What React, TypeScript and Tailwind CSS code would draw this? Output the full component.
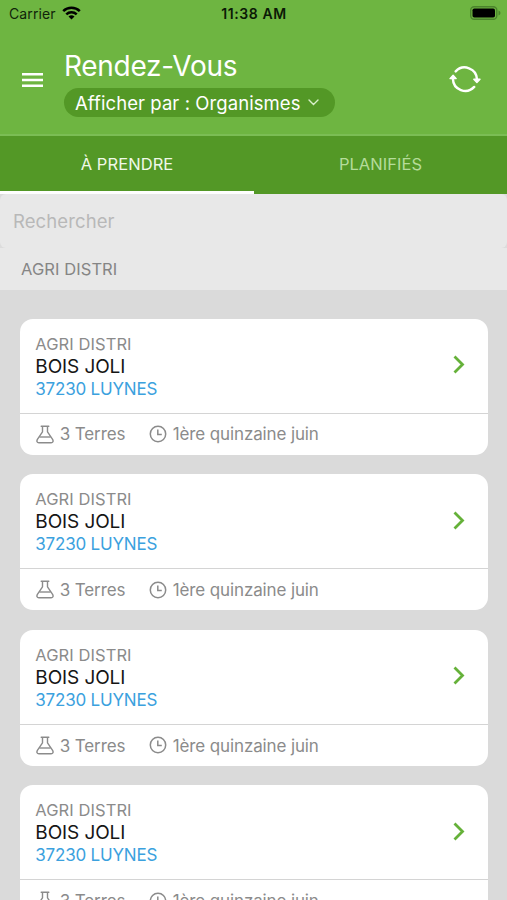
type Appointment = {
  id: number;
  organism: string;
  farm: string;
  city: string;
  samples: string;
  period: string;
};

const appointments: Appointment[] = [1, 2, 3, 4].map((id) => ({
  id,
  organism: 'AGRI DISTRI',
  farm: 'BOIS JOLI',
  city: '37230 LUYNES',
  samples: '3 Terres',
  period: '1ère quinzaine juin',
}));

function StatusBar() {
  return (
    <div className="flex h-7 items-center justify-between pl-[9px] pr-[6px] text-[14px] text-[#10240a]">
      <div className="flex w-[120px] items-center gap-[6px]">
        <span className="-mt-[2px] tracking-[0.1px]">Carrier</span>
        <svg className="-mt-[2px]" width="19" height="14" viewBox="0 0 19 14" fill="none" stroke="#000" strokeWidth="2.5">
          <path d="M1.2 5.2a11.8 11.8 0 0 1 16.6 0" />
          <path d="M4.3 8.4a7.4 7.4 0 0 1 10.4 0" />
          <path d="M9.5 13.6 6.5 10.6a4.3 4.3 0 0 1 6 0Z" fill="#000" stroke="none" />
        </svg>
      </div>
      <span className="-mt-[2px] mr-[2px] text-[14px] font-semibold tracking-[0.6px] text-[#0b1a06]">11:38 AM</span>
      <div className="flex w-[120px] justify-end">
        <svg className="-mt-[2px]" width="31" height="14" viewBox="0 0 31 14">
          <rect x="0.7" y="0.7" width="26.1" height="12.6" rx="3.5" fill="none" stroke="#4b842c" strokeWidth="1.4" />
          <rect x="2.5" y="2.5" width="22.5" height="9" rx="1.8" fill="#000" />
          <path d="M28.5 4.5q2 .8 2 2.5t-2 2.5Z" fill="#4b842c" />
        </svg>
      </div>
    </div>
  );
}

function Header() {
  return (
    <header className="h-[136px] border-b-2 border-[#7bbd54] bg-[#6eb541] text-white">
      <StatusBar />
      <div className="flex pt-[20px] pl-[22px] pr-[26px]">
        <button className="mt-[25px] flex h-[14px] w-[21px] items-center">
          <svg width="21" height="14" viewBox="0 0 21 14" stroke="#fff" strokeWidth="2.6">
            <path d="M0 1.3h21M0 7h21M0 12.7h21" />
          </svg>
        </button>
        <div className="ml-[21px] flex flex-col items-start">
          <h1 className="h-[40px] text-[28px] leading-[37px] tracking-[-0.3px] whitespace-nowrap">Rendez-Vous</h1>
          <button className="flex h-[29px] w-[271px] items-center gap-[7px] rounded-full bg-[#539826] pl-[11px]">
            <span className="text-[18.5px] leading-[30px] tracking-[0.07px] whitespace-nowrap">Afficher par : Organismes</span>
            <svg width="11" height="7" viewBox="0 0 11 7" fill="none" stroke="#d9f0cb" strokeWidth="1.4" strokeLinecap="round">
              <path d="m1 1 4.5 4.5L10 1" />
            </svg>
          </button>
        </div>
        <button className="mt-[17px] ml-auto h-[28px] w-[32px]">
          <svg width="32" height="28" viewBox="0 0 32 28" fill="none" stroke="#fff" strokeWidth="2.4" strokeLinecap="round">
            <path d="M6.7 6.4a12.3 12.3 0 0 1 21.3 8" />
            <path d="M25.2 21.9a12.3 12.3 0 0 1-21.3-8" />
            <path d="M24.8 14.2h6.2l-3.1 3.4ZM1 13.6h6.2l-3.1-3.4Z" fill="#fff" strokeWidth="1.4" strokeLinejoin="round" />
          </svg>
        </button>
      </div>
    </header>
  );
}

function Tabs() {
  return (
    <nav className="flex h-[58px] bg-[#539826] text-[16.5px] leading-[57px]">
      <button className="flex h-full w-[254px] justify-center border-b-[3px] border-white tracking-[0.08px] text-[#f0f8e9]">
        À PRENDRE
      </button>
      <button className="flex h-full flex-1 justify-center tracking-[0.05px] text-[#b5dc9a]">PLANIFIÉS</button>
    </nav>
  );
}

function FlaskIcon() {
  return (
    <svg width="18" height="19" viewBox="0 0 18 19" fill="none" stroke="#8b8b8b" strokeWidth="1.4" strokeLinejoin="round">
      <path d="M5.2 1.3h7.6" strokeLinecap="round" />
      <path d="M6.5 1.4v5.4L1.4 14.4c-1 1.7-.4 3.3 1.5 3.3h12.2c1.9 0 2.5-1.6 1.5-3.3L11.5 6.8V1.4" />
      <path d="M3.4 12h11.2" />
    </svg>
  );
}

function ClockIcon() {
  return (
    <svg width="18" height="18" viewBox="0 0 18 18" fill="none" stroke="#8b8b8b" strokeWidth="1.5">
      <circle cx="9" cy="9" r="7.7" />
      <path d="M8.8 4.5v5h4" />
    </svg>
  );
}

function AppointmentCard({ item }: { item: Appointment }) {
  return (
    <article className="h-[136px] shrink-0 rounded-[13px] bg-white">
      <div className="flex h-[95px] items-center justify-between border-b border-[#d4d4d4] pt-px pl-[15px] pr-[23px]">
        <div className="whitespace-nowrap">
          <div className="text-[16.5px] leading-[22px] tracking-[0.08px] text-[#8b8b8b]">{item.organism}</div>
          <div className="text-[19px] leading-[23px] tracking-[-0.1px] text-[#151515]">{item.farm}</div>
          <div className="text-[17px] leading-[22px] tracking-[-0.2px] text-[#3ba1de]">{item.city}</div>
        </div>
        <svg className="-mt-[3px]" width="12" height="19" viewBox="0 0 12 19" fill="none" stroke="#65b139" strokeWidth="2.8">
          <path d="m1.5 1.5 8 8-8 8" />
        </svg>
      </div>
      <div className="flex h-[41px] items-center pt-[2px] pl-[15.5px] text-[17px] tracking-[-0.13px] whitespace-nowrap text-[#8b8b8b]">
        <span className="-mt-[2px]">
          <FlaskIcon />
        </span>
        <span className="ml-[6px] w-[83px]">{item.samples}</span>
        <span className="-mt-[2px] ml-[6px]">
          <ClockIcon />
        </span>
        <span className="ml-[6px]">{item.period}</span>
      </div>
    </article>
  );
}

export default function App() {
  return (
    <div className="h-[900px] w-full overflow-hidden bg-[#dadada] font-['Inter','Liberation_Sans',sans-serif]">
      <Header />
      <Tabs />
      <div className="h-[54px] bg-[#dcdcdc]">
        <input
          className="h-full w-full rounded-[6px] bg-[#e8e8e8] px-[13px] text-[18.5px] tracking-[0.1px] placeholder:text-[#b8b8b8]"
          placeholder="Rechercher"
        />
      </div>
      <div className="h-[42px] bg-[#e8e8e8] pl-[21px] text-[16.5px] leading-[42px] tracking-[0.08px] text-[#858585]">
        AGRI DISTRI
      </div>
      <main className="flex flex-col gap-[19.6px] pt-[28.6px] pr-[19.5px] pl-[20.3px]">
        {appointments.map((item) => (
          <AppointmentCard key={item.id} item={item} />
        ))}
      </main>
    </div>
  );
}
